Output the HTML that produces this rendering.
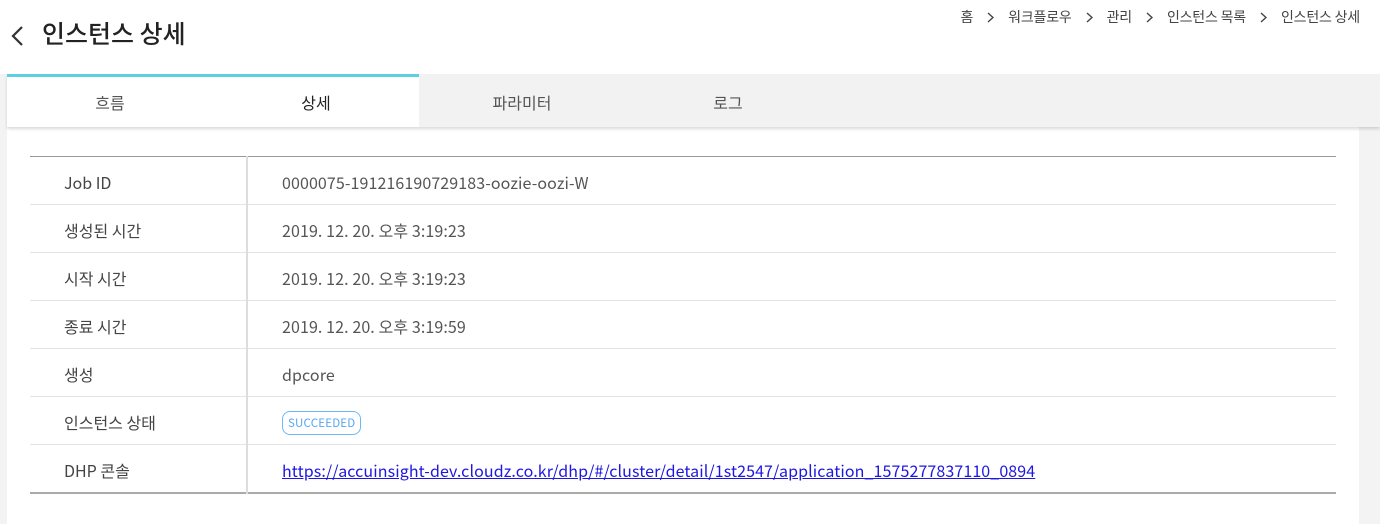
<!DOCTYPE html>
<html><head><meta charset="utf-8"><style>
*{margin:0;padding:0;box-sizing:border-box}
body{width:1380px;height:524px;overflow:hidden;background:#fff;font-family:"Noto Sans CJK KR","Liberation Sans",sans-serif;color:#333;position:relative}
.title{position:absolute;left:42px;top:15px;font-size:25px;font-weight:500;color:#222}
.back{position:absolute;left:10px;top:25px}
.bc{position:absolute;right:20px;top:7px;font-size:14px;color:#444;letter-spacing:-0.2px}
.bc svg{display:inline-block;margin:0 14px;vertical-align:-1px}
.tabs{position:absolute;left:7px;top:74px;width:1373px;height:53px;background:#f2f2f2;box-shadow:0 2px 3px rgba(0,0,0,0.15);z-index:2}
.tabs .act{position:absolute;left:0;top:0;width:412px;height:53px;background:#fff;border-top:3px solid #5ccfe0}
.tab{position:absolute;top:0;line-height:56px;font-size:16px;color:#555;width:206px;text-align:center}
.left{position:absolute;left:0;top:74px;width:7px;height:450px;background:#f3f3f3}
.right{position:absolute;left:1359px;top:127px;width:21px;height:397px;background:#f3f3f3}
table{position:absolute;left:30px;top:156px;width:1306px;border-collapse:collapse;border-top:1px solid #999;border-bottom:2px solid #aaa}
td{height:48px;border-bottom:1px solid #e4e4e4;font-size:16px;color:#555;vertical-align:middle;line-height:20px;padding-top:3px}
td.l{width:217px;padding-left:34px;border-right:2px solid #ddd;color:#444}
td.v{padding-left:34px;letter-spacing:0.1px}
tr:last-child td{border-bottom:none}
.badge{display:inline-block;border:1px solid #6bb8f5;color:#55a8ef;border-radius:8px;font-size:11.5px;line-height:16px;padding:3px 5px;letter-spacing:0.2px}
a{color:#1e17e0;text-decoration:underline}
</style></head><body>
<svg class="back" width="16" height="22" viewBox="0 0 16 22"><path d="M12 2 L3 11 L12 20" fill="none" stroke="#333" stroke-width="2.2"/></svg>
<div class="title">인스턴스 상세</div>
<div class="bc">홈<svg width="7" height="11" viewBox="0 0 7 11"><path d="M1 1 L6 5.5 L1 10" fill="none" stroke="#444" stroke-width="1.4"/></svg>워크플로우<svg width="7" height="11" viewBox="0 0 7 11"><path d="M1 1 L6 5.5 L1 10" fill="none" stroke="#444" stroke-width="1.4"/></svg>관리<svg width="7" height="11" viewBox="0 0 7 11"><path d="M1 1 L6 5.5 L1 10" fill="none" stroke="#444" stroke-width="1.4"/></svg>인스턴스 목록<svg width="7" height="11" viewBox="0 0 7 11"><path d="M1 1 L6 5.5 L1 10" fill="none" stroke="#444" stroke-width="1.4"/></svg>인스턴스 상세</div>
<div class="left"></div>
<div class="tabs"><div class="act"></div>
<div class="tab" style="left:0">흐름</div>
<div class="tab" style="left:206px;color:#222">상세</div>
<div class="tab" style="left:412px">파라미터</div>
<div class="tab" style="left:618px">로그</div>
</div>
<div class="right"></div>
<table>
<tr><td class="l">Job ID</td><td class="v">0000075-191216190729183-oozie-oozi-W</td></tr>
<tr><td class="l">생성된 시간</td><td class="v">2019. 12. 20. 오후 3:19:23</td></tr>
<tr><td class="l">시작 시간</td><td class="v">2019. 12. 20. 오후 3:19:23</td></tr>
<tr><td class="l">종료 시간</td><td class="v">2019. 12. 20. 오후 3:19:59</td></tr>
<tr><td class="l">생성</td><td class="v">dpcore</td></tr>
<tr><td class="l">인스턴스 상태</td><td class="v"><span class="badge">SUCCEEDED</span></td></tr>
<tr><td class="l">DHP 콘솔</td><td class="v"><a>https://accuinsight-dev.cloudz.co.kr/dhp/#/cluster/detail/1st2547/application_1575277837110_0894</a></td></tr>
</table>
</body></html>
